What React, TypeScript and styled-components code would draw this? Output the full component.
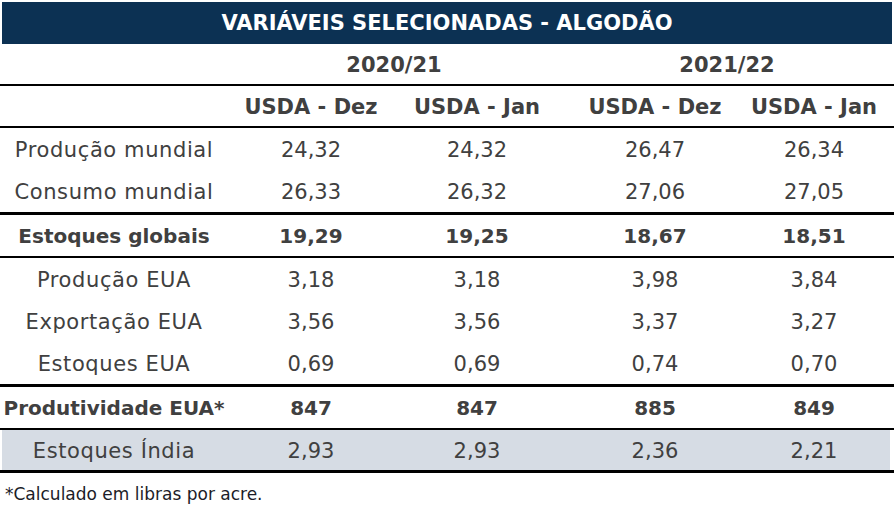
import styled, { createGlobalStyle, css } from "styled-components";

const GlobalStyle = createGlobalStyle`
  html, body {
    margin: 0;
    padding: 0;
    background: #fff;
  }
  body {
    font-family: "DejaVu Sans", "Noto Sans", sans-serif;
    color: #404040;
  }
`;

const Page = styled.div`
  width: 894px;
  padding-top: 2px;
`;

const Title = styled.div`
  margin: 0 2px;
  height: 42px;
  display: flex;
  align-items: center;
  justify-content: center;
  background-color: #0c3153;
  color: #fff;
  font-size: 21px;
  font-weight: 700;
`;

type RowProps = {
  $height: number;
  $line?: number;
  $shaded?: boolean;
  $bold?: boolean;
};

// label | 2020/21 dez | jan | (narrow gap) | 2021/22 dez | jan
const Row = styled.div<RowProps>`
  display: grid;
  grid-template-columns: 228px 166px 166px 16px 158px 160px;
  align-items: center;
  height: ${(p) => p.$height}px;
  border-bottom: ${(p) => (p.$line ? `${p.$line}px solid #000` : "none")};
  font-weight: ${(p) => (p.$bold ? 700 : 400)};
  ${(p) =>
    p.$shaded &&
    css`
      background: linear-gradient(#d6dce4, #d6dce4) 2px 0 / 888px 100%
        no-repeat;
    `}
`;

const Cell = styled.div<{ $col: string; $size?: number }>`
  grid-column: ${(p) => p.$col};
  text-align: center;
  font-size: ${(p) => p.$size ?? 21}px;
  white-space: nowrap;
  padding-top: 1px;
`;

// regular-weight labels are set a little wider than the figures
const Label = styled(Cell)<{ $bold?: boolean }>`
  font-size: ${(p) => (p.$bold ? 20 : 21)}px;
  letter-spacing: ${(p) => (p.$bold ? 0 : 0.6)}px;
`;

const Footnote = styled.div`
  padding: 11px 0 0 5px;
  font-size: 17px;
  color: #1c1c28;
`;

const valueCols = ["2", "3", "5", "6"];

type DataRow = {
  label: string;
  values: string[];
  height: number;
  line?: number;
  bold?: boolean;
  shaded?: boolean;
};

const rows: DataRow[] = [
  { label: "Produção mundial", values: ["24,32", "24,32", "26,47", "26,34"], height: 42 },
  { label: "Consumo mundial", values: ["26,33", "26,32", "27,06", "27,05"], height: 42, line: 3 },
  { label: "Estoques globais", values: ["19,29", "19,25", "18,67", "18,51"], height: 41, line: 2, bold: true },
  { label: "Produção EUA", values: ["3,18", "3,18", "3,98", "3,84"], height: 42 },
  { label: "Exportação EUA", values: ["3,56", "3,56", "3,37", "3,27"], height: 42 },
  { label: "Estoques EUA", values: ["0,69", "0,69", "0,74", "0,70"], height: 42, line: 3 },
  { label: "Produtividade EUA*", values: ["847", "847", "885", "849"], height: 41, line: 2, bold: true },
  { label: "Estoques Índia", values: ["2,93", "2,93", "2,36", "2,21"], height: 40, line: 3, shaded: true },
];

const sources = ["USDA - Dez", "USDA - Jan", "USDA - Dez", "USDA - Jan"];

export default function App() {
  return (
    <Page>
      <GlobalStyle />
      <Title>VARIÁVEIS SELECIONADAS - ALGODÃO</Title>
      <Row $height={40} $line={2} $bold>
        <Cell $col="2 / 4">2020/21</Cell>
        <Cell $col="4 / 7">2021/22</Cell>
      </Row>
      <Row $height={40} $line={2} $bold>
        {sources.map((s, i) => (
          <Cell key={i} $col={valueCols[i]}>
            {s}
          </Cell>
        ))}
      </Row>
      {rows.map((r) => (
        <Row
          key={r.label}
          $height={r.height}
          $line={r.line}
          $bold={r.bold}
          $shaded={r.shaded}
        >
          <Label $col="1" $bold={r.bold}>
            {r.label}
          </Label>
          {r.values.map((v, i) => (
            <Cell key={i} $col={valueCols[i]} $size={r.bold ? 20 : 21}>
              {v}
            </Cell>
          ))}
        </Row>
      ))}
      <Footnote>*Calculado em libras por acre.</Footnote>
    </Page>
  );
}
